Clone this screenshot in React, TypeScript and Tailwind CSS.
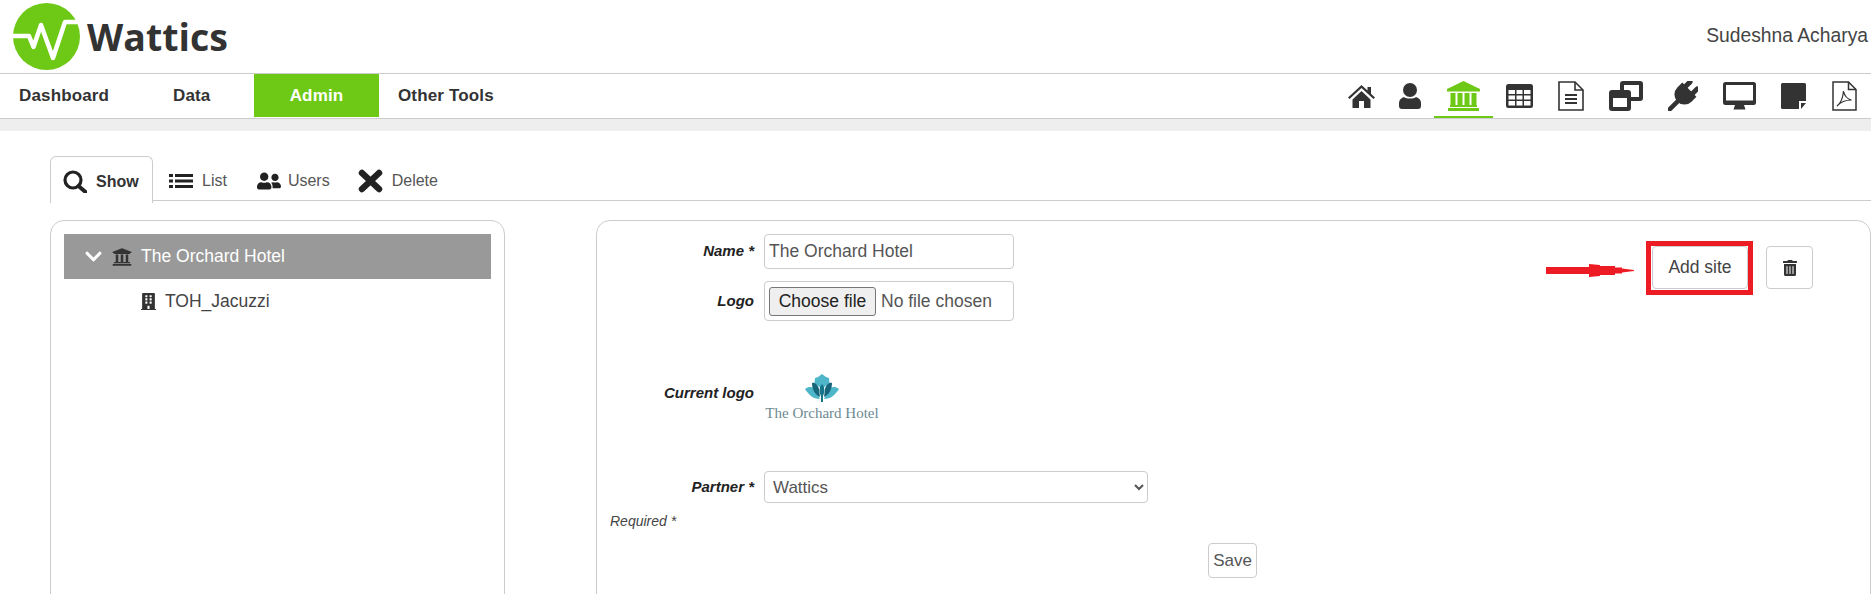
import { FaUserFriends, FaUniversity, FaChevronDown, FaBuilding, FaTrashAlt } from "react-icons/fa";

const font = { fontFamily: '"Liberation Sans", Arial, sans-serif' };

function WatticsLogo() {
  return (
    <div className="flex items-center">
      <svg width="67" height="67" viewBox="0 0 67 67">
        <circle cx="33.5" cy="33.500" r="33.5" fill="#6ec916" />
        <path d="M0 33H16L20.500 44L28 22L40 55L52 19H67" fill="none" stroke="#fff" strokeWidth="4.500" strokeLinejoin="round" />
      </svg>
      <span className="ml-[7px] text-[37.5px] font-bold leading-none text-[#333]" style={{ fontFamily: '"Open Sans", sans-serif' }}>Wattics</span>
    </div>
  );
}

function TopNav({ label, active, className }: { label: string; active?: boolean; className: string }) {
  return (
    <div className={`${className} flex h-[43px] items-center text-[17px] font-bold tracking-[0.15px] ${active ? "justify-center bg-[#6ec916] text-white" : "text-[#333]"}`}>
      {label}
    </div>
  );
}

function HomeIcon() {
  return (
    <svg width="27" height="23" viewBox="0 0 27 23" fill="#333">
      <path d="M0 12.500L13.500 0l6 5.500V2h3.500v6.700l4 3.800-1.500 1.600L13.500 3 1.500 14.100z" />
      <path d="M4.500 14.500L13.500 6l9 8.500V23H16v-7h-5v7H4.500z" />
    </svg>
  );
}

function UserIcon() {
  return (
    <svg width="22" height="26" viewBox="0 0 22 26" fill="#333">
      <circle cx="11" cy="7" r="7" />
      <path d="M5 14c2 2 10 2 12 0 3 1 5 3 5 6v3a3 3 0 0 1-3 3H3a3 3 0 0 1-3-3v-3c0-3 2-5 5-6z" />
    </svg>
  );
}

function BankIcon() {
  return (
    <svg width="33" height="30" viewBox="0 0 33 30" fill="#6ec916">
      <path d="M16.500 0L33 8v2.500H0V8z" />
      <path d="M3.500 12h5v12h-5zM10.500 12h5v12h-5zM17.500 12h5v12h-5zM24.500 12h5v12h-5z" />
      <path d="M3 24h27v2H3zM1 27h31v3H1z" />
    </svg>
  );
}

function TableIcon() {
  return (
    <svg width="27" height="24" viewBox="0 0 27 24">
      <rect width="27" height="24" rx="2.500" fill="#333" />
      <path d="M2.500 6h6.500v4H2.500zM10.500 6h6v4h-6zM18 6h6.500v4H18zM2.500 11.500h6.500v4H2.500zM10.500 11.500h6v4h-6zM18 11.500h6.500v4H18zM2.500 17h6.500v4.500H2.500zM10.500 17h6v4.500h-6zM18 17h6.500v4.500H18z" fill="#fff" />
    </svg>
  );
}

function FileIcon() {
  return (
    <svg width="26" height="30" viewBox="0 0 26 30" fill="none" stroke="#333" strokeWidth="1.600">
      <path d="M1 1h16l8 8v20H1z" />
      <path d="M17 1v8h8" />
      <path d="M7 14h12M7 18h12M7 22h12" strokeWidth="2" />
    </svg>
  );
}

function CloneIcon() {
  return (
    <svg width="34" height="30" viewBox="0 0 34 30">
      <rect x="11" width="23" height="20" rx="3" fill="#333" />
      <rect x="15" y="4" width="15" height="12" fill="#fff" />
      <rect y="9" width="22" height="21" rx="3" fill="#333" />
      <rect x="4" y="17" width="14" height="9" fill="#fff" />
    </svg>
  );
}

function PlugIcon() {
  return (
    <svg width="30" height="30" viewBox="0 0 30 30" fill="#333">
      <g transform="rotate(45 15 15)">
        <path d="M10 8V0M20 8V0" stroke="#333" strokeWidth="5" strokeLinecap="round" />
        <path d="M5 6h20v7a10 10 0 0 1-20 0z" />
        <path d="M15 20v17" stroke="#333" strokeWidth="4.500" strokeLinecap="round" />
      </g>
    </svg>
  );
}

function MonitorIcon() {
  return (
    <svg width="33" height="28" viewBox="0 0 33 28">
      <rect width="33" height="23" rx="2.500" fill="#333" />
      <rect x="3" y="3" width="27" height="15.500" fill="#fff" />
      <path d="M12 23h9l1.500 4.500h-12z" fill="#333" />
    </svg>
  );
}

function NoteIcon() {
  return (
    <svg width="25" height="26" viewBox="0 0 25 26" fill="#333">
      <path d="M1.500 0h22A1.500 1.500 0 0 1 25 1.500V18h-7v8H1.500A1.500 1.500 0 0 1 0 24.500V1.500A1.500 1.500 0 0 1 1.500 0z" />
      <path d="M20 20h5l-5 6z" />
    </svg>
  );
}

function PdfIcon() {
  return (
    <svg width="25" height="30" viewBox="0 0 25 30" fill="none" stroke="#333" strokeWidth="1.500">
      <path d="M1 1h15.500L24 8.500V29H1z" />
      <path d="M16.500 1v7.500H24" />
      <path d="M5 25c4-3 6-9 6.500-15 1 5 3 8 8 9-5 0-10 1-14.500 6z" strokeWidth="1.200" />
    </svg>
  );
}

function SearchIcon() {
  return (
    <svg width="24" height="23" viewBox="0 0 24 23" fill="none" stroke="#222" strokeWidth="3.200">
      <circle cx="10" cy="10" r="8" />
      <path d="M15.500 16l7 6" strokeWidth="4" strokeLinecap="round" />
    </svg>
  );
}

function ListIcon() {
  return (
    <svg width="24" height="14" viewBox="0 0 24 14" fill="#222">
      <path d="M0 0h4v3H0zM6 0h18v3H6zM0 5.500h4v3H0zM6 5.500h18v3H6zM0 11h4v3H0zM6 11h18v3H6z" />
    </svg>
  );
}

function CrossIcon() {
  return (
    <svg width="25" height="24" viewBox="0 0 25 24" stroke="#222" strokeWidth="6.500" strokeLinecap="round">
      <path d="M4 4l17 16M21 4L4 20" />
    </svg>
  );
}

function NavIcon({ w, active, children }: { w: string; active?: boolean; children: React.ReactNode }) {
  return (
    <div className={`${w} flex h-[44px] items-center justify-center border-y-2 border-t-transparent ${active ? "border-b-[#6ec916]" : "border-b-transparent"}`}>
      {children}
    </div>
  );
}

function Tab({ label, className, icon }: { label: string; className: string; icon: React.ReactNode }) {
  return (
    <div className={`flex h-[45px] items-center pt-[5px] text-[16px] text-[#555] ${className}`}>
      {icon}
      {label}
    </div>
  );
}

function FormRow({ label, className, labelClass, children }: { label: string; className?: string; labelClass?: string; children: React.ReactNode }) {
  return (
    <div className={`flex ${className ?? "items-center"}`}>
      <div className={`w-[158px] pr-[10px] text-right text-[15px] font-bold italic text-[#222] ${labelClass ?? ""}`}>{label}</div>
      {children}
    </div>
  );
}

export default function App() {
  return (
    <div className="h-[594px] overflow-hidden bg-white" style={font}>
      <header className="flex h-[74px] items-start justify-between border-b border-[#ccc] pl-[13px] pr-[3px]">
        <div className="mt-[3px]"><WatticsLogo /></div>
        <div className="mt-[22px] text-[19.3px] text-[#444]">Sudeshna Acharya</div>
      </header>

      <nav className="flex h-[45px] items-start justify-between border-b border-[#ccc]">
        <div className="flex">
          <TopNav label="Dashboard" className="w-[173px] pl-[19px]" />
          <TopNav label="Data" className="w-[81px]" />
          <TopNav label="Admin" active className="w-[125px]" />
          <TopNav label="Other Tools" className="pl-[19px]" />
        </div>
        <div className="flex items-center">
          <NavIcon w="w-[50px]"><HomeIcon /></NavIcon>
          <NavIcon w="w-[48px]"><UserIcon /></NavIcon>
          <NavIcon w="w-[59px]" active><BankIcon /></NavIcon>
          <NavIcon w="w-[53px]"><TableIcon /></NavIcon>
          <NavIcon w="w-[50px]"><FileIcon /></NavIcon>
          <NavIcon w="w-[60px]"><CloneIcon /></NavIcon>
          <NavIcon w="w-[54px]"><PlugIcon /></NavIcon>
          <NavIcon w="w-[59px]"><MonitorIcon /></NavIcon>
          <NavIcon w="w-[49px]"><NoteIcon /></NavIcon>
          <NavIcon w="w-[53px]"><PdfIcon /></NavIcon>
        </div>
      </nav>

      <div className="h-[12px] bg-[#eee]" />

      <div className="ml-[50px] mt-[25px] flex h-[45px] items-start border-b border-[#ccc]">
        <div className="flex h-[47px] w-[103px] items-center gap-[9px] rounded-t-[6px] border border-b-0 border-[#ccc] bg-white pl-[12px] pt-[3px] text-[16px] font-bold text-[#333]">
          <SearchIcon />
          Show
        </div>
        <Tab label="List" className="ml-[16px] gap-[9px]" icon={<ListIcon />} />
        <Tab label="Users" className="ml-[30px] gap-[7px]" icon={<FaUserFriends size={24} className="text-[#222]" />} />
        <Tab label="Delete" className="ml-[28px] gap-[9px]" icon={<CrossIcon />} />
      </div>

      <div className="mt-[19px] flex items-start gap-[91px] pl-[50px]">
        <div className="h-[400px] w-[455px] shrink-0 rounded-[14px] border border-[#ccc] p-[13px]">
          <div className="flex h-[45px] items-center bg-[#999] pl-[20px] text-[17.5px] text-white">
            <FaChevronDown size={19} />
            <FaUniversity size={20} className="ml-[9px] text-[#333]" />
            <span className="ml-[9px]">The Orchard Hotel</span>
          </div>
          <div className="flex h-[45px] items-center pl-[76px] text-[17.5px] text-[#444]">
            <FaBuilding size={17} className="text-[#333]" />
            <span className="ml-[8px]">TOH_Jacuzzi</span>
          </div>
        </div>

        <div className="relative h-[400px] flex-1 rounded-[14px] border border-[#ccc] pl-[9px] pt-[13px]">
          <FormRow label="Name *">
            <input readOnly value="The Orchard Hotel" className="h-[35px] w-[250px] rounded-[4px] border border-[#ccc] px-[4px] text-[17.5px] text-[#555]" />
          </FormRow>
          <FormRow label="Logo" className="mt-[12px] items-center">
            <div className="flex h-[40px] w-[250px] items-center rounded-[4px] border border-[#ccc] px-[4px] text-[17.5px] text-[#555]">
              <button className="h-[29px] w-[107px] rounded-[3px] border border-[#767676] bg-[#efefef] text-[#222]">Choose file</button>
              <span className="ml-[5px]">No file chosen</span>
            </div>
          </FormRow>
          <FormRow label="Current logo" className="mt-[53px] items-start" labelClass="pt-[8px]">
            <div className="flex w-[116px] flex-col items-center">
              <svg width="34" height="28" viewBox="0 0 34 28">
                <path d="M17 0l4 3 3 1 .5 5-7.500 6-7.500-6L10 4l3-1z" fill="#4fb6c9" />
                <path d="M0 15c4-3 8-2 10 0l5 10c-7 0-11-4-15-10zM34 15c-4-3-8-2-10 0l-5 10c7 0 11-4 15-10z" fill="#4fb6c9" />
                <path d="M7 9c3-1 6 2 7 6l1 8c-5-2-8-8-8-14zM27 9c-3-1-6 2-7 6l-1 8c5-2 8-8 8-14z" fill="#17657a" />
                <path d="M17 10c3 3 3 8 1 12v6h-2v-6c-2-4-2-9 1-12z" fill="#17758a" />
              </svg>
              <span className="whitespace-nowrap text-[15px] leading-[22px] text-[#6d8a92]" style={{ fontFamily: '"Liberation Serif", serif' }}>The Orchard Hotel</span>
            </div>
          </FormRow>
          <FormRow label="Partner *" className="mt-[47px] items-center">
            <select className="h-[32px] w-[384px] rounded-[4px] border border-[#ccc] pl-[4px] text-[17px] text-[#555]">
              <option>Wattics</option>
            </select>
          </FormRow>
          <div className="ml-[4px] mt-[8px] text-[14px] italic leading-[21px] text-[#444]">Required *</div>
          <button className="ml-[602px] mt-[11px] flex h-[35px] w-[49px] items-center justify-center rounded-[4px] border border-[#ccc] text-[17px] text-[#555]">Save</button>

          <svg width="88" height="13" viewBox="0 0 88 13" className="absolute left-[949px] top-[43px]">
            <path d="M0 3H43V0L54 1V2H69V3.500H76V4.500L88 6V7L76 8.500V9.500H69V11H54V12L43 13V10H0Z" fill="#ed1c24" />
          </svg>
          <div className="absolute left-[1049px] top-[20px] border-[5px] border-[#ed1c24] pb-px pl-px">
            <button className="flex h-[43px] w-[96px] items-center justify-center rounded-[4px] border border-[#ccc] bg-white text-[17.5px] text-[#444]">Add site</button>
          </div>
          <button className="absolute left-[1169px] top-[25px] flex h-[43px] w-[47px] items-center justify-center rounded-[4px] border border-[#ccc]">
            <FaTrashAlt size={16} className="text-[#333]" />
          </button>
        </div>
      </div>
    </div>
  );
}
